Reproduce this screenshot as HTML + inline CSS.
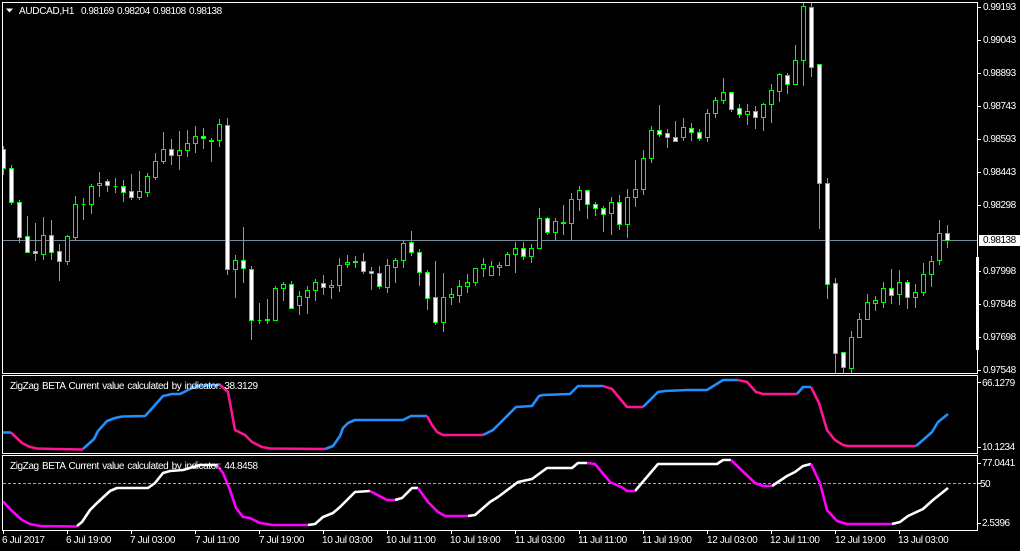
<!DOCTYPE html>
<html><head><meta charset="utf-8"><style>
html,body{margin:0;padding:0;background:#000;width:1020px;height:551px;overflow:hidden}
svg{position:absolute;left:0;top:0}
span{position:absolute;color:#fff;font:10px/12px "Liberation Sans",sans-serif;letter-spacing:-.5px;white-space:pre}
.t{top:535px;letter-spacing:-.35px}
.z{letter-spacing:-.42px;word-spacing:1px}
</style></head><body>
<svg width="1020" height="551" viewBox="0 0 1020 551">
<defs><clipPath id="m"><rect x="3" y="3" width="974" height="370"/></clipPath></defs>
<path shape-rendering="crispEdges" stroke="#778899" fill="none" d="M3 240.5H977"/>
<path shape-rendering="crispEdges" stroke="#daa520" stroke-dasharray="3 2" fill="none" d="M3 483.5H977"/>
<g clip-path="url(#m)" shape-rendering="crispEdges" stroke="#00ff00" fill="none">
<path d="M3.5 146V175M11.5 165V205M19.5 200V243M27.5 216V253M35.5 223V261M43.5 217V260M51.5 220V260M59.5 244V281M67.5 235V265M75.5 196V240M83.5 198V220M91.5 184V214M99.5 172V197M107.5 179V192M115.5 178V193M123.5 180V202M131.5 174V200M139.5 171V200M147.5 173V197M155.5 153V180M163.5 132V164M171.5 139V165M179.5 131V170M187.5 130V157M195.5 126V153M203.5 128V149M211.5 138V162M219.5 119V147M227.5 118V275M235.5 255V298M243.5 227V283M251.5 266V340M259.5 303V324M267.5 299V324M275.5 286V321M283.5 282V301M291.5 281V309M299.5 291V315M307.5 286V314M315.5 279V301M323.5 275V295M331.5 280V299M339.5 258V292M347.5 255V268M355.5 256V268M363.5 253V274M371.5 267V290M379.5 266V289M387.5 259V293M395.5 258V283M403.5 241V268M411.5 231V256M419.5 249V286M427.5 270V310M435.5 261V325M443.5 273V332M451.5 288V305M459.5 280V303M467.5 274V293M475.5 268V286M483.5 258V277M491.5 261V276M499.5 262V276M507.5 252V266M515.5 242V273M523.5 242V260M531.5 244V263M539.5 208V249M547.5 217V235M555.5 218V240M563.5 205V235M571.5 193V240M579.5 186V211M587.5 190V219M595.5 202V216M603.5 206V232M611.5 197V235M619.5 195V230M627.5 189V238M635.5 160V207M643.5 150V195M651.5 126V163M659.5 105V137M667.5 129V148M675.5 121V142M683.5 118V141M691.5 123V141M699.5 129V141M707.5 109V142M715.5 97V118M723.5 78V104M731.5 92V112M739.5 104V118M747.5 104V125M755.5 106V129M763.5 103V131M771.5 84V123M779.5 73V102M787.5 73V94M795.5 45V85M803.5 3V86M811.5 3V77M819.5 64V229M827.5 178V299M835.5 278V374M843.5 352V374M851.5 331V374M859.5 313V338M867.5 294V320M875.5 296V311M883.5 282V308M891.5 269V304M899.5 270V305M907.5 280V309M915.5 284V308M923.5 263V296M931.5 256V287M939.5 220V265M947.5 225V248"/>
<path fill="#000" d="M41.5 235.5h4v19h-4zM65.5 236.5h4v25h-4zM73.5 204.5h4v33h-4zM81.5 204.5h4v0h-4zM89.5 186.5h4v18h-4zM97.5 183.5h4v2h-4zM113.5 186.5h4v0h-4zM137.5 191.5h4v6h-4zM145.5 176.5h4v16h-4zM153.5 161.5h4v16h-4zM161.5 149.5h4v12h-4zM177.5 150.5h4v5h-4zM185.5 143.5h4v7h-4zM193.5 136.5h4v7h-4zM209.5 140.5h4v1h-4zM217.5 124.5h4v16h-4zM233.5 260.5h4v9h-4zM257.5 320.5h4v0h-4zM265.5 319.5h4v1h-4zM273.5 288.5h4v32h-4zM281.5 284.5h4v4h-4zM297.5 296.5h4v9h-4zM305.5 290.5h4v7h-4zM313.5 282.5h4v8h-4zM329.5 285.5h4v2h-4zM337.5 265.5h4v20h-4zM345.5 262.5h4v2h-4zM353.5 261.5h4v1h-4zM385.5 265.5h4v22h-4zM393.5 260.5h4v7h-4zM401.5 243.5h4v17h-4zM441.5 297.5h4v25h-4zM449.5 294.5h4v3h-4zM457.5 286.5h4v9h-4zM465.5 282.5h4v4h-4zM473.5 268.5h4v14h-4zM481.5 264.5h4v4h-4zM489.5 266.5h4v9h-4zM497.5 265.5h4v2h-4zM505.5 254.5h4v11h-4zM513.5 248.5h4v6h-4zM529.5 248.5h4v8h-4zM537.5 218.5h4v30h-4zM553.5 221.5h4v11h-4zM561.5 222.5h4v1h-4zM569.5 199.5h4v24h-4zM577.5 190.5h4v9h-4zM609.5 202.5h4v11h-4zM625.5 197.5h4v27h-4zM633.5 189.5h4v8h-4zM641.5 158.5h4v31h-4zM649.5 130.5h4v28h-4zM681.5 127.5h4v10h-4zM705.5 113.5h4v24h-4zM713.5 100.5h4v13h-4zM721.5 92.5h4v8h-4zM745.5 111.5h4v3h-4zM761.5 104.5h4v13h-4zM769.5 90.5h4v14h-4zM777.5 74.5h4v17h-4zM793.5 60.5h4v24h-4zM801.5 6.5h4v54h-4zM849.5 337.5h4v31h-4zM857.5 319.5h4v18h-4zM865.5 302.5h4v17h-4zM873.5 300.5h4v3h-4zM881.5 288.5h4v14h-4zM897.5 282.5h4v12h-4zM913.5 292.5h4v5h-4zM921.5 274.5h4v18h-4zM929.5 261.5h4v13h-4zM937.5 233.5h4v27h-4z"/>
<path fill="#fff" d="M1.5 149.5h4v19h-4zM9.5 168.5h4v34h-4zM17.5 202.5h4v35h-4zM25.5 236.5h4v16h-4zM33.5 251.5h4v2h-4zM49.5 235.5h4v17h-4zM57.5 251.5h4v10h-4zM105.5 181.5h4v4h-4zM121.5 186.5h4v6h-4zM129.5 191.5h4v6h-4zM169.5 149.5h4v6h-4zM201.5 136.5h4v2h-4zM225.5 125.5h4v144h-4zM241.5 260.5h4v8h-4zM249.5 269.5h4v51h-4zM289.5 284.5h4v24h-4zM321.5 283.5h4v4h-4zM361.5 261.5h4v10h-4zM369.5 271.5h4v2h-4zM377.5 273.5h4v13h-4zM409.5 242.5h4v10h-4zM417.5 252.5h4v20h-4zM425.5 272.5h4v26h-4zM433.5 297.5h4v25h-4zM521.5 248.5h4v8h-4zM545.5 218.5h4v14h-4zM585.5 190.5h4v14h-4zM593.5 204.5h4v4h-4zM601.5 208.5h4v6h-4zM617.5 202.5h4v22h-4zM657.5 130.5h4v4h-4zM665.5 133.5h4v4h-4zM673.5 137.5h4v4h-4zM689.5 128.5h4v4h-4zM697.5 132.5h4v6h-4zM729.5 92.5h4v17h-4zM737.5 108.5h4v6h-4zM753.5 111.5h4v6h-4zM785.5 75.5h4v9h-4zM809.5 7.5h4v60h-4zM817.5 64.5h4v119h-4zM825.5 183.5h4v101h-4zM833.5 283.5h4v70h-4zM841.5 352.5h4v15h-4zM889.5 288.5h4v7h-4zM905.5 282.5h4v15h-4zM945.5 233.5h4v7h-4z"/>
</g>
<g fill="none" stroke-width="2.6" stroke-linejoin="round" stroke-linecap="butt">
<g stroke="#1e90ff">
<path d="M3 432.5L11 432.5"/>
<path d="M83 449L94 439 98 431 107 421 115 418 122 416.5 145 416 147 414 155 405 163 396 172 394 180 394 190 389 197 386 220 385"/>
<path d="M325 449L333 446 340 436 343 428 348 423 355 420 403 420 411 416 427 416"/>
<path d="M483 435L493 430 516 407 532 406 539 396 543 395 570 394 578 386 603 386"/>
<path d="M643 407L658 392 665 391 687 390 707 390 723 380 738 380"/>
<path d="M797 394L803 387 811 387"/>
<path d="M916 446L923 440 932 432 938 422 948 414"/>
</g>
<g stroke="#ff1493">
<path d="M11 432.5L22 443 30 447 37 448.5 55 449 83 449.5"/>
<path d="M220 385L228 392 235 430 245 435 252 442 262 447 270 448.5 325 449"/>
<path d="M427 416L432 425 437 432 443 435 483 435"/>
<path d="M603 386L612 389 627 407 643 407"/>
<path d="M738 380L747 382 756 392 763 394 797 394"/>
<path d="M811 387L819 403 827 430 835 440 843 445 848 446 916 446"/>
</g>
<g stroke="#fff">
<path d="M77 526L82 522 90 510 97 503 110 491 117 488 148 488 155 483 163 473 170 471 183 470 200 465 217 465"/>
<path d="M308 525L315 524 323 517 333 513 340 507 355 492 370 491"/>
<path d="M395 500L402 498 412 488 418 488"/>
<path d="M468 516L475 515 490 502 498 497 518 482 532 479 547 468 572 468 578 463 587 463"/>
<path d="M635 491L658 464 717 464 723 460 731 460"/>
<path d="M772 486L787 476 795 472 803 466 811 464"/>
<path d="M892 524L900 522 908 516 923 509 933 500 948 488"/>
</g>
<g stroke="#f0f">
<path d="M3 501.5L11 510 22 520 30 524 40 526 77 526.5"/>
<path d="M217 465L223 473 230 490 236 508 243 517 250 518 260 523 273 525 308 525"/>
<path d="M370 491L387 500 395 500"/>
<path d="M418 488L428 502 438 512 445 516 468 516"/>
<path d="M587 463L595 464 610 482 623 488 627 491 635 491"/>
<path d="M731 460L755 483 763 486 772 486"/>
<path d="M811 464L820 483 827 510 837 521 847 524 892 524"/>
</g>
</g>
<g shape-rendering="crispEdges" fill="#fff">
<rect x="2" y="2" width="976" height="1"/><rect x="2" y="2" width="1" height="372"/><rect x="977" y="2" width="1" height="372"/><rect x="2" y="373" width="976" height="1"/>
<rect x="2" y="375" width="976" height="1"/><rect x="2" y="375" width="1" height="79"/><rect x="977" y="375" width="1" height="79"/><rect x="2" y="453" width="976" height="1"/>
<rect x="2" y="455" width="976" height="1"/><rect x="2" y="455" width="1" height="76"/><rect x="977" y="455" width="1" height="76"/><rect x="2" y="530" width="976" height="1"/>
<rect x="976" y="257" width="3" height="93"/>
<rect x="979" y="235" width="41" height="11"/>
<path d="M978 7h3v1h-3zM978 40h3v1h-3zM978 73h3v1h-3zM978 106h3v1h-3zM978 139h3v1h-3zM978 172h3v1h-3zM978 205h3v1h-3zM978 271h3v1h-3zM978 304h3v1h-3zM978 337h3v1h-3zM978 370h3v1h-3zM978 382h3v1h-3zM978 447h3v1h-3zM978 463h3v1h-3zM978 483h3v1h-3zM978 523h3v1h-3zM3 531h1v3h-1zM67 531h1v3h-1zM131 531h1v3h-1zM195 531h1v3h-1zM259 531h1v3h-1zM323 531h1v3h-1zM387 531h1v3h-1zM451 531h1v3h-1zM515 531h1v3h-1zM579 531h1v3h-1zM643 531h1v3h-1zM707 531h1v3h-1zM771 531h1v3h-1zM835 531h1v3h-1zM899 531h1v3h-1z"/>
<path shape-rendering="auto" d="M6 8.5h7l-3.5 4z"/>
</g>
</svg>
<span style="left:19px;top:6px;letter-spacing:-.3px">AUDCAD,H1</span>
<span style="left:81px;top:6px">0.98169</span><span style="left:117px;top:6px">0.98204</span><span style="left:153px;top:6px">0.98108</span><span style="left:189px;top:6px">0.98138</span>
<span style="left:983px;top:2px">0.99193</span>
<span style="left:983px;top:35px">0.99043</span>
<span style="left:983px;top:68px">0.98893</span>
<span style="left:983px;top:101px">0.98743</span>
<span style="left:983px;top:134px">0.98593</span>
<span style="left:983px;top:167px">0.98443</span>
<span style="left:983px;top:200px">0.98298</span>
<span style="left:983px;top:235px;color:#000">0.98138</span>
<span style="left:983px;top:266px">0.97998</span>
<span style="left:983px;top:299px">0.97848</span>
<span style="left:983px;top:332px">0.97698</span>
<span style="left:983px;top:365px">0.97548</span>
<span style="left:982px;top:378px">66.1279</span>
<span style="left:982px;top:442px">10.1234</span>
<span style="left:982px;top:458px">77.0441</span>
<span style="left:980px;top:479px">50</span>
<span style="left:982px;top:518px">2.5396</span>
<span class="z" style="left:10px;top:381px">ZigZag BETA Current value calculated by indicator: 38.3129</span>
<span class="z" style="left:10px;top:461px">ZigZag BETA Current value calculated by indicator: 44.8458</span>
<span class="t" style="left:2px">6 Jul 2017</span>
<span class="t" style="left:66px">6 Jul 19:00</span>
<span class="t" style="left:130px">7 Jul 03:00</span>
<span class="t" style="left:195px">7 Jul 11:00</span>
<span class="t" style="left:259px">7 Jul 19:00</span>
<span class="t" style="left:322px">10 Jul 03:00</span>
<span class="t" style="left:386px">10 Jul 11:00</span>
<span class="t" style="left:450px">10 Jul 19:00</span>
<span class="t" style="left:515px">11 Jul 03:00</span>
<span class="t" style="left:578px">11 Jul 11:00</span>
<span class="t" style="left:642px">11 Jul 19:00</span>
<span class="t" style="left:707px">12 Jul 03:00</span>
<span class="t" style="left:770px">12 Jul 11:00</span>
<span class="t" style="left:835px">12 Jul 19:00</span>
<span class="t" style="left:898px">13 Jul 03:00</span>
</body></html>
